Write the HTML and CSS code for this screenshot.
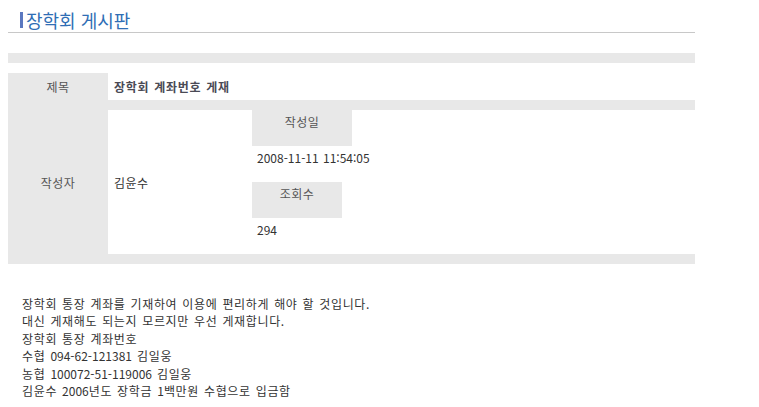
FILE: index.html
```html
<!DOCTYPE html>
<html lang="ko">
<head>
  <meta charset="UTF-8">
  <title>장학회 게시판</title>
  <link rel="stylesheet" href="styles.css">
</head>
<body>
  <div class="wrap">
    <h2 class="board-title">장학회 게시판</h2>

    <div class="bar"></div>

    <div class="view">
      <div class="label">제목</div>
      <div class="cell subject">장학회 계좌번호 게재</div>

      <div class="label">작성자</div>
      <div class="cell writer">
        <div class="name">김윤수</div>
        <div class="info">
          <div class="info-head date-head">작성일</div>
          <div class="info-val">2008-11-11 11:54:05</div>
          <div class="info-head hit-head">조회수</div>
          <div class="info-val">294</div>
        </div>
      </div>
    </div>

    <div class="content">
      장학회 통장 계좌를 기재하여 이용에 편리하게 해야 할 것입니다.<br>
      대신 게재해도 되는지 모르지만 우선 게재합니다.<br>
      장학회 통장 계좌번호<br>
      수협 <span class="num">094-62-121381</span> 김일웅<br>
      농협 <span class="num">100072-51-119006</span> 김일웅<br>
      김윤수 <span class="num">2006</span>년도 장학금 <span class="num">1</span>백만원 수협으로 입금함
    </div>
  </div>
</body>
</html>
```

FILE: styles.css
```css
body {
  margin: 8px;
  font-family: "Noto Sans CJK KR", "Noto Sans", sans-serif;
  font-size: 12px;
  color: #333;
  background: white;
}

.wrap {
  width: 687px;
}

.board-title {
  margin: 0;
  height: 24px;
  padding-left: 12px;
  border-bottom: 1px solid #c8c8c8;
  display: flex;
  align-items: center;
  font-size: 18px;
  font-weight: normal;
  color: #2f6eb5;
  line-height: 18px;
}

.board-title::before {
  content: "";
  width: 3px;
  height: 16px;
  margin-right: 3px;
  background: #5b78c0;
}

.bar {
  height: 10px;
  margin-top: 20px;
  background: #e8e8e8;
}

.view {
  margin-top: 10px;
  display: grid;
  grid-template-columns: 100px 1fr;
  row-gap: 10px;
  background: #e8e8e8;
  padding-bottom: 10px;
}

.label {
  display: flex;
  align-items: center;
  justify-content: center;
  color: #555;
  letter-spacing: 0.5px;
}

.cell {
  background: white;
}

.subject {
  height: 27px;
  display: flex;
  align-items: center;
  padding-left: 6px;
  font-weight: bold;
  color: #4a4a55;
  word-spacing: 1px;
  letter-spacing: 0.7px;
}

.writer {
  height: 144px;
  display: flex;
}

.name {
  width: 138px;
  padding-left: 6px;
  display: flex;
  align-items: center;
  letter-spacing: 0.5px;
}

.info-head,
.info-val {
  height: 36px;
  line-height: 24px;
}

.info-head {
  background: #e8e8e8;
  text-align: center;
  color: #555;
  letter-spacing: 0.5px;
}

.date-head {
  width: 100px;
}

.hit-head {
  width: 90px;
}

.info-val {
  padding-left: 5px;
  word-spacing: 1px;
}

.content {
  margin-top: 31px;
  padding-left: 14px;
  line-height: 17.4px;
  word-spacing: 1px;
  letter-spacing: 0.65px;
}

.content .num {
  letter-spacing: 0;
}
```
